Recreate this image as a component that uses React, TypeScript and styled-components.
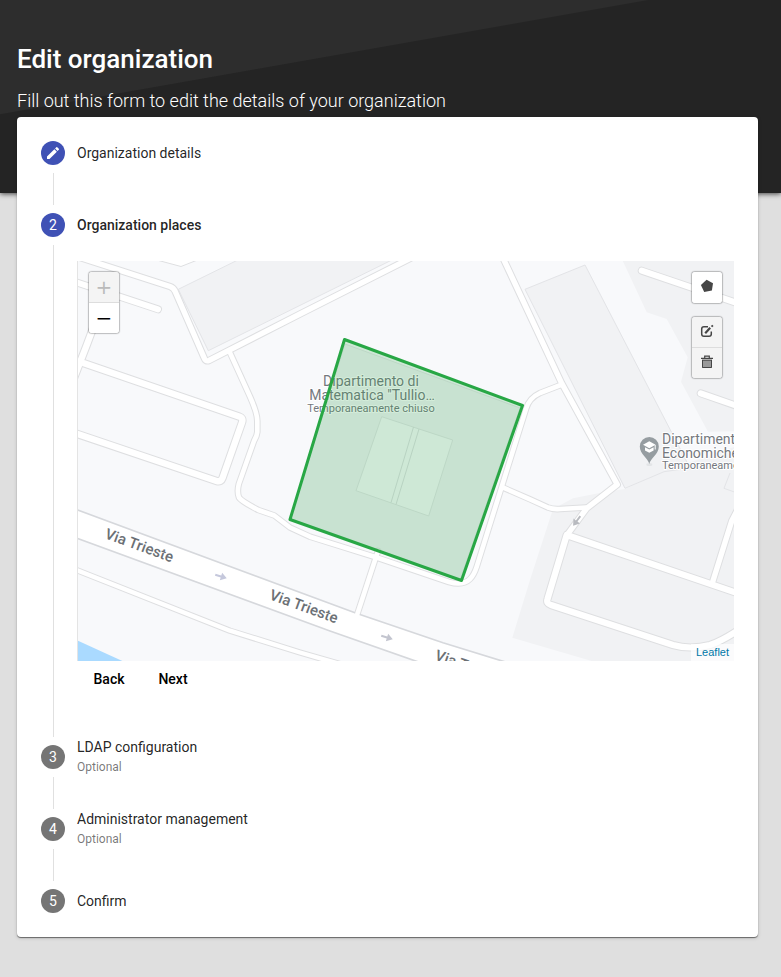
import React, { useState } from "react";
import styled, { createGlobalStyle } from "styled-components";

const GlobalStyle = createGlobalStyle`
  *, *::before, *::after { box-sizing: border-box; }
  body {
    margin: 0;
    background: #dfdfdf;
    color: rgba(0, 0, 0, 0.87);
    font-family: Roboto, "Liberation Sans", sans-serif;
  }
  button { font-family: inherit; }
`;

const Page = styled.div`
  min-height: 100vh;
  padding-bottom: 40px;
`;

const Hero = styled.header`
  padding: 40px 17px 80px;
  color: #fff;
  background: linear-gradient(170deg, #2d2d2d 112px, #242424 113px);
  box-shadow: 0 1px 5px rgba(0, 0, 0, 0.7);
`;

const Title = styled.h1`
  margin: 0 0 10px;
  font-size: 26px;
  line-height: 38px;
  font-weight: 500;
`;

const Subtitle = styled.p`
  margin: 0;
  font-size: 18px;
  line-height: 25px;
  font-weight: 300;
`;

const Card = styled.main`
  position: relative;
  margin: -76px 23px 0 17px;
  padding: 24px;
  background: #fff;
  border-radius: 4px;
  box-shadow: 0 1px 1px rgba(0, 0, 0, 0.5), 0 1px 4px rgba(0, 0, 0, 0.14);
`;

const StepList = styled.ol`
  margin: 0;
  padding: 0;
  list-style: none;
`;

const StepHeader = styled.button`
  display: flex;
  align-items: center;
  gap: 12px;
  width: 100%;
  height: 24px;
  padding: 0;
  border: 0;
  background: none;
  color: inherit;
  text-align: left;
  cursor: pointer;
`;

const StepBadge = styled.span<{ $active: boolean }>`
  display: flex;
  flex: none;
  align-items: center;
  justify-content: center;
  width: 24px;
  height: 24px;
  border-radius: 50%;
  background: ${(p) => (p.$active ? "#3f51b5" : "#757575")};
  color: #fff;
  font-size: 14px;
  line-height: 24px;
`;

const StepText = styled.span`
  display: flex;
  flex-direction: column;
`;

const StepLabel = styled.span<{ $selected: boolean }>`
  font-size: 14px;
  line-height: 20px;
  font-weight: ${(p) => (p.$selected ? 500 : 400)};
`;

const StepOptional = styled.span`
  font-size: 12px;
  line-height: 20px;
  color: rgba(0, 0, 0, 0.54);
`;

const StepBody = styled.div`
  display: grid;
  grid-template-columns: 24px minmax(0, 1fr);
  column-gap: 12px;
  min-height: 48px;
`;

const StepLine = styled.span`
  width: 1px;
  margin: 8px 0 8px 12px;
  background: #e0e0e0;
`;

const StepContent = styled.div`
  padding: 24px 0 48px;
`;

const MapFrame = styled.div`
  position: relative;
  height: 400px;
  overflow: hidden;
  border-left: 1px solid #e4e4e4;
  background: #f8f9fb;
`;

const MapDrawing = styled.svg`
  display: block;
  width: 100%;
  height: 100%;
`;

const StreetNames = styled.g`
  font: 500 15px Roboto, sans-serif;
  fill: #6b7075;
`;

const PlaceNames = styled.g`
  font: 14px Roboto, sans-serif;
  fill: #74787e;
  stroke: #fff;
  stroke-width: 2px;
  stroke-linejoin: round;
  paint-order: stroke;
`;

const PlaceStatus = styled.text`
  font-size: 11px;
`;

const ControlCorner = styled.div<{ $side: "left" | "right" }>`
  position: absolute;
  top: 10px;
  ${(p) => (p.$side === "left" ? "left: 10px" : "right: 11px")};
  display: flex;
  flex-direction: column;
  gap: 12px;
`;

const ControlBar = styled.div`
  display: flex;
  flex-direction: column;
  width: 32px;
  border: 1px solid rgba(0, 0, 0, 0.22);
  border-radius: 4px;
  background-clip: padding-box;
  box-shadow: 0 0 1px rgba(0, 0, 0, 0.3);
  overflow: hidden;
`;

const ControlButton = styled.button`
  display: flex;
  align-items: center;
  justify-content: center;
  height: 30px;
  padding: 0;
  border: 0;
  background: #fff;
  color: #000;
  font: 20px/30px "DejaVu Sans", sans-serif;
  cursor: pointer;

  &:only-child,
  & + & {
    height: 31px;
  }

  & + & {
    border-top: 1px solid #ddd;
  }

  &:disabled {
    background: #f4f4f4;
    color: #bbb;
    cursor: default;
  }
`;

const ToolButton = styled(ControlButton)`
  padding-bottom: 3px;
`;

const Attribution = styled.div`
  position: absolute;
  right: 0;
  bottom: 0;
  padding: 0 5px;
  background: rgba(255, 255, 255, 0.7);
  font: 11px/17px "Liberation Sans", Arial, sans-serif;

  a {
    color: #0078a8;
    text-decoration: none;
  }
`;

const Actions = styled.div`
  display: flex;
`;

const TextButton = styled.button`
  min-width: 64px;
  padding: 0 16px;
  border: 0;
  border-radius: 4px;
  background: transparent;
  color: #000;
  font-size: 14px;
  line-height: 36px;
  font-weight: 500;
  cursor: pointer;
`;

const PencilIcon = () => (
  <svg width="16" height="16" viewBox="0 0 24 24" fill="currentColor" aria-hidden="true">
    <path d="M3 17.25V21h3.75L17.81 9.94l-3.75-3.75L3 17.25zM20.71 7.04a1 1 0 0 0 0-1.41l-2.34-2.34a1 1 0 0 0-1.41 0l-1.83 1.83 3.75 3.75 1.83-1.83z" />
  </svg>
);

const PentagonIcon = () => (
  <svg width="14" height="14" viewBox="0 0 14 14" fill="#464646" aria-hidden="true">
    <path d="M6.6 .8 13 4.2 11.9 11.6 4.2 12.9 .9 6z" />
  </svg>
);

const EditIcon = () => (
  <svg width="14" height="14" viewBox="0 0 14 14" fill="none" stroke="#464646" aria-hidden="true">
    <path d="M8 2.8H4Q1.7 2.8 1.7 5v5Q1.7 12.3 4 12.3h5q2.3 0 2.3-2.3V7.6" strokeWidth="1.5" />
    <path d="M5.2 9.2 10.2 3.8" strokeWidth="2.2" />
    <path d="M11.5 2.7 12.9 1.3" strokeWidth="1.8" />
  </svg>
);

const TrashIcon = () => (
  <svg width="14" height="14" viewBox="0 0 14 14" aria-hidden="true">
    <path d="M2 4.7h10V13H2z" fill="#999" />
    <path d="M1 3.3h12M4.700 2.8V1.2h4.600v1.6" fill="none" stroke="#464646" strokeWidth="1.2" />
    <path d="M2.500 5v7.500h9V5M2 5.200h10" fill="none" stroke="#464646" strokeWidth="1" />
  </svg>
);

type Road = { d: string; w: number };

const roads: Road[] = [
  { d: "M70 280.2 158 309.3", w: 6 },
  { d: "M98 315 86 347 74 378", w: 6.4 },
  { d: "M84 363.3 239 416.5Q243.500 418 242 422.500L222.500 478Q221 482.500 216.500 481L70 431.500", w: 6.4 },
  { d: "M230 352.700 250 396.700Q257.300 413 257.300 421V432Q257 436 254 441L238.800 484Q236.800 492 239 497.500Q241 501 258.300 510L274.300 515.500 290 527.500 310 536.700 376 557.300 449 582Q463 586 470 579Q474 575 476.700 566.700L501.700 486.700 526 409Q529 398 540 393L562 384.500", w: 4.6 },
  { d: "M80 257.500 170 286.500Q173.500 287.800 175 291L204 357.500Q205.500 362 209 360.500L300 314 410 258.500", w: 5.4 },
  { d: "M503 258 561.700 383.300 617.300 484.500 586.700 508.300 567 535", w: 5.4 },
  { d: "M503.300 487.700 530 499.300 548 507.500Q553 509.500 560 509L586 507.500", w: 4.6 },
  { d: "M740 594 566.700 535 547.500 599Q546 603.500 551 605L673 645Q690 650 710 645 722 641 740 629", w: 6.2 },
  { d: "M712.700 581.700 731.700 521 740 505", w: 5.4 },
  { d: "M378 551 357 615", w: 4.6 },
  { d: "M641.700 270.700 740 304", w: 6 },
  { d: "M700.700 393.300 740 407", w: 6 },
  { d: "M70 567.500 230 630.700 300 652.500 340 664", w: 4.4 },
];

const streetLabels = [
  { x: 104, y: 538, angle: 20 },
  { x: 268.500, y: 599, angle: 20 },
  { x: 434, y: 659.500, angle: 19 },
];

const arrows = [
  { x: 221, y: 576.500, angle: 17, fill: "#c5c8dc" },
  { x: 387, y: 637.500, angle: 17, fill: "#c3c5cf" },
  { x: 576.700, y: 521, angle: 127, fill: "#b9bbc0" },
];

const MapView = () => (
  <MapDrawing viewBox="78 261 656 400" preserveAspectRatio="xMidYMid slice" role="img" aria-label="Map of the organization places">
    <rect x="-400" y="0" width="1800" height="1000" fill="#f8f9fb" />
    <g fill="#f1f2f4">
      <path d="M620 255 646.700 312.300 666.700 319 687.700 357.300 681 381.700 708 431.700 760 431V255z" />
      <path d="M760 438 663 471.700 625 489 606 491.700 573 498.300 553 509 530 580 512.300 637.700 591.700 661 600 670H760z" />
      <g stroke="#e3e4e7" strokeWidth="1">
        <path d="M248 255 178.300 289.300 208.300 350.700 404 254z" />
        <path d="M585 265 525 289.300 625 488.300 664 471.700 690 468z" />
        <path d="M345 344 520 408 460 580 290 520z" />
        <path d="M740 494 724 488.300 730 473" fill="none" />
      </g>
    </g>
    <path d="M381.700 416.700 452.700 440 428.700 516 356 490.700z" fill="#f8f9fb" stroke="#e2e4e6" />
    <path d="M413.500 427 391 502.700M419 429 396 504.500" stroke="#dddfe1" />
    <path d="M70 637 130 664.500H70z" fill="#aadaff" />
    <path d="M153 259 181 266.500 200 259z" fill="#fff" stroke="#dedfe1" />

    <g fill="none" stroke="#dedfe1" strokeLinecap="round" strokeLinejoin="round">
      {roads.map((r) => (
        <path key={r.d} d={r.d} strokeWidth={r.w + 2} />
      ))}
    </g>
    <path
      d="M60 503.500 357 613.500 443 642.700 520 666.500 500 690 415 660.800 330 631 60 532z"
      fill="#fff"
      stroke="#d6d8dc"
      strokeWidth="1.7"
    />
    <g fill="none" stroke="#fff" strokeLinecap="round" strokeLinejoin="round">
      {roads.map((r) => (
        <path key={r.d} d={r.d} strokeWidth={r.w} />
      ))}
    </g>

    {arrows.map((a) => (
      <path
        key={a.x}
        d="M-6-1H0V-4L6 0 0 4V1H-6z"
        fill={a.fill}
        transform={`translate(${a.x} ${a.y}) rotate(${a.angle})`}
      />
    ))}

    <StreetNames>
      {streetLabels.map((s) => (
        <text key={s.x} transform={`translate(${s.x} ${s.y}) rotate(${s.angle})`}>
          Via Trieste
        </text>
      ))}
    </StreetNames>

    <PlaceNames textAnchor="middle">
      <text x="371" y="386">Dipartimento di</text>
      <text x="372" y="400">Matematica "Tullio…</text>
      <PlaceStatus x="371" y="412">Temporaneamente chiuso</PlaceStatus>
    </PlaceNames>
    <PlaceNames>
      <text x="662" y="444">Dipartimento</text>
      <text x="662" y="458">Economiche</text>
      <PlaceStatus x="662" y="469">Temporaneamente</PlaceStatus>
    </PlaceNames>

    <ellipse cx="649.300" cy="464.500" rx="3" ry="1.500" fill="#e3e5e7" />
    <path
      d="M649.300 464C648.300 458.500 639.800 454 639.800 446.500a9.500 9.500 0 0 1 19 0C658.800 454 650.300 458.500 649.300 464z"
      fill="#969da1"
    />
    <path d="M649.300 441.300 643 444.800 649.300 448.200 655.600 444.800zM645 447.300v3.100l4.300 2.300 4.300-2.300v-3.100l-4.300 2.300z" fill="#fff" />
    <path d="M655.200 445v4.500" stroke="#fff" strokeWidth="1" />

    <path
      d="M344.500 339.500 522.500 405.500 461.500 580.500 290 519.500z"
      fill="#28a745"
      fillOpacity="0.2"
      stroke="#28a745"
      strokeWidth="3"
      strokeLinejoin="round"
    />
  </MapDrawing>
);

const PlacesStep = () => (
  <StepContent>
    <MapFrame>
      <MapView />
      <ControlCorner $side="left">
        <ControlBar>
          <ControlButton type="button" aria-label="Zoom in" disabled>+</ControlButton>
          <ControlButton type="button" aria-label="Zoom out">−</ControlButton>
        </ControlBar>
      </ControlCorner>
      <ControlCorner $side="right">
        <ControlBar>
          <ToolButton type="button" aria-label="Draw a polygon"><PentagonIcon /></ToolButton>
        </ControlBar>
        <ControlBar>
          <ToolButton type="button" aria-label="Edit layers" disabled><EditIcon /></ToolButton>
          <ToolButton type="button" aria-label="Delete layers" disabled><TrashIcon /></ToolButton>
        </ControlBar>
      </ControlCorner>
      <Attribution><a href="https://leafletjs.com">Leaflet</a></Attribution>
    </MapFrame>
    <Actions>
      <TextButton type="button">Back</TextButton>
      <TextButton type="button">Next</TextButton>
    </Actions>
  </StepContent>
);

const steps = [
  { label: "Organization details", optional: false },
  { label: "Organization places", optional: false },
  { label: "LDAP configuration", optional: true },
  { label: "Administrator management", optional: true },
  { label: "Confirm", optional: false },
];

export default function App() {
  const [selected, setSelected] = useState(1);
  return (
    <>
      <GlobalStyle />
      <Page>
        <Hero>
          <Title>Edit organization</Title>
          <Subtitle>Fill out this form to edit the details of your organization</Subtitle>
        </Hero>
        <Card>
          <StepList>
            {steps.map((step, i) => (
              <li key={step.label}>
                <StepHeader
                  type="button"
                  aria-current={i === selected ? "step" : undefined}
                  onClick={() => setSelected(i)}
                >
                  <StepBadge $active={i <= selected}>{i < selected ? <PencilIcon /> : i + 1}</StepBadge>
                  <StepText>
                    <StepLabel $selected={i === selected}>{step.label}</StepLabel>
                    {step.optional && <StepOptional>Optional</StepOptional>}
                  </StepText>
                </StepHeader>
                {i < steps.length - 1 && (
                  <StepBody>
                    <StepLine />
                    {i === 1 && selected === 1 && <PlacesStep />}
                  </StepBody>
                )}
              </li>
            ))}
          </StepList>
        </Card>
      </Page>
    </>
  );
}
